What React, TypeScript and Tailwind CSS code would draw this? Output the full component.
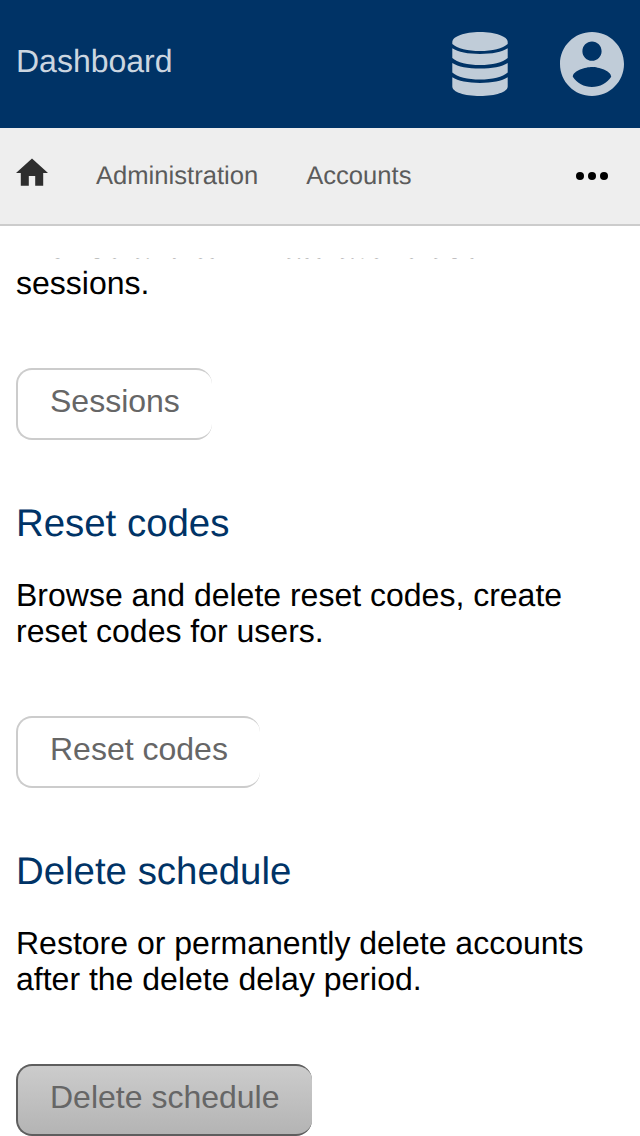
function DatabaseIcon() {
  return (
    <svg className="h-16 w-14" viewBox="0 0 56 64" fill="currentColor">
      <path d="M0.300 10C0.300 4.500 12.500 0 28 0s27.700 4.500 27.700 10v2C51 16.500 40 19 28 19S5 16.500 0.300 12z" />
      <path d="M0.300 16.300C6 20 16 22 28 22s22-2 27.700-5.700V26C51 30.500 40 33 28 33S5 30.500 0.300 26z" />
      <path d="M0.300 30.900C6 34.600 16 36.600 28 36.600s22-2 27.700-5.700v9.700C51 45.100 40 47.600 28 47.600S5 45.100 0.300 40.600z" />
      <path d="M0.300 45.200C6 48.900 16 50.900 28 50.900s22-2 27.700-5.700V54.500C55.700 60 43.500 64 28 64S0.300 60 0.300 54.500z" />
    </svg>
  );
}

function AccountIcon() {
  return (
    <svg className="size-16" viewBox="2 2 20 20" fill="currentColor">
      <path d="M12 2C6.48 2 2 6.48 2 12s4.48 10 10 10 10-4.48 10-10S17.52 2 12 2zm0 3c1.66 0 3 1.34 3 3s-1.34 3-3 3-3-1.34-3-3 1.34-3 3-3zm0 14.2c-2.5 0-4.71-1.28-6-3.22.03-1.99 4-3.08 6-3.08 1.99 0 5.97 1.09 6 3.08-1.29 1.94-3.5 3.22-6 3.22z" />
    </svg>
  );
}

function HomeIcon() {
  return (
    <svg className="mt-[30px] h-[28px] w-8 text-[#2e2e2e]" viewBox="2 2.7 20 17.5" fill="currentColor">
      <path d="M10 20v-6h4v6h5v-8h3L12 3 2 12h3v8z" />
    </svg>
  );
}

function MoreIcon() {
  return (
    <svg className="mt-11 mr-8 ml-auto h-2 w-8" viewBox="0 0 32 8">
      <circle cx="4" cy="4" r="4" />
      <circle cx="16" cy="4" r="4" />
      <circle cx="28" cy="4" r="4" />
    </svg>
  );
}

type SectionProps = { title: string; text: string; action: string; active?: boolean };

function Section({ title, text, action, active = false }: SectionProps) {
  return (
    <section className="mb-[62px]">
      <h2 className="mb-[31px] text-[38.4px] leading-[44px] text-[#003366]">{title}</h2>
      <p className="text-[32px] leading-9">{text}</p>
      <button
        type="button"
        className={`mt-[67px] block h-[72px] rounded-2xl border-2 border-r-0 pt-[13px] pb-[19px] pl-8 text-[32px] leading-9 whitespace-nowrap text-[#666] ${
          active
            ? "border-[#5e5e5e] bg-linear-to-b from-[#ccc] to-[#b4b4b4] pr-[33px]"
            : "border-[#ccc] bg-white pr-8"
        }`}
      >
        {action}
      </button>
    </section>
  );
}

export default function App() {
  return (
    <div className="flex h-[1136px] w-[640px] flex-col overflow-hidden bg-white font-['Liberation_Sans',Arial,sans-serif] text-black [text-rendering:geometricPrecision]">
      <header className="flex h-32 shrink-0 items-center bg-[#003366] px-4 text-[#c0ccd8]">
        <h1 className="mr-auto pb-[6px] text-[32px] leading-9 text-[#ccd6e0]">Dashboard</h1>
        <div className="flex gap-[52px]">
          <DatabaseIcon />
          <AccountIcon />
        </div>
      </header>
      <nav className="flex h-[98px] shrink-0 items-start border-b-2 border-[#ccc] bg-[#eee] pl-4 text-[25.6px] leading-[29px] text-[#5b5b5b]">
        <HomeIcon />
        <a className="mt-[34px] ml-12">Administration</a>
        <a className="mt-[34px] ml-12">Accounts</a>
        <div className="ml-auto text-black">
          <MoreIcon />
        </div>
      </nav>
      <main className="mt-8 min-h-0 flex-1 overflow-hidden px-4">
        <div className="-mt-[104px]">
          <Section title="Sessions" text="Browse and terminate active user sessions." action="Sessions" />
          <Section
            title="Reset codes"
            text="Browse and delete reset codes, create reset codes for users."
            action="Reset codes"
          />
          <Section
            title="Delete schedule"
            text="Restore or permanently delete accounts after the delete delay period."
            action="Delete schedule"
            active
          />
        </div>
      </main>
    </div>
  );
}
